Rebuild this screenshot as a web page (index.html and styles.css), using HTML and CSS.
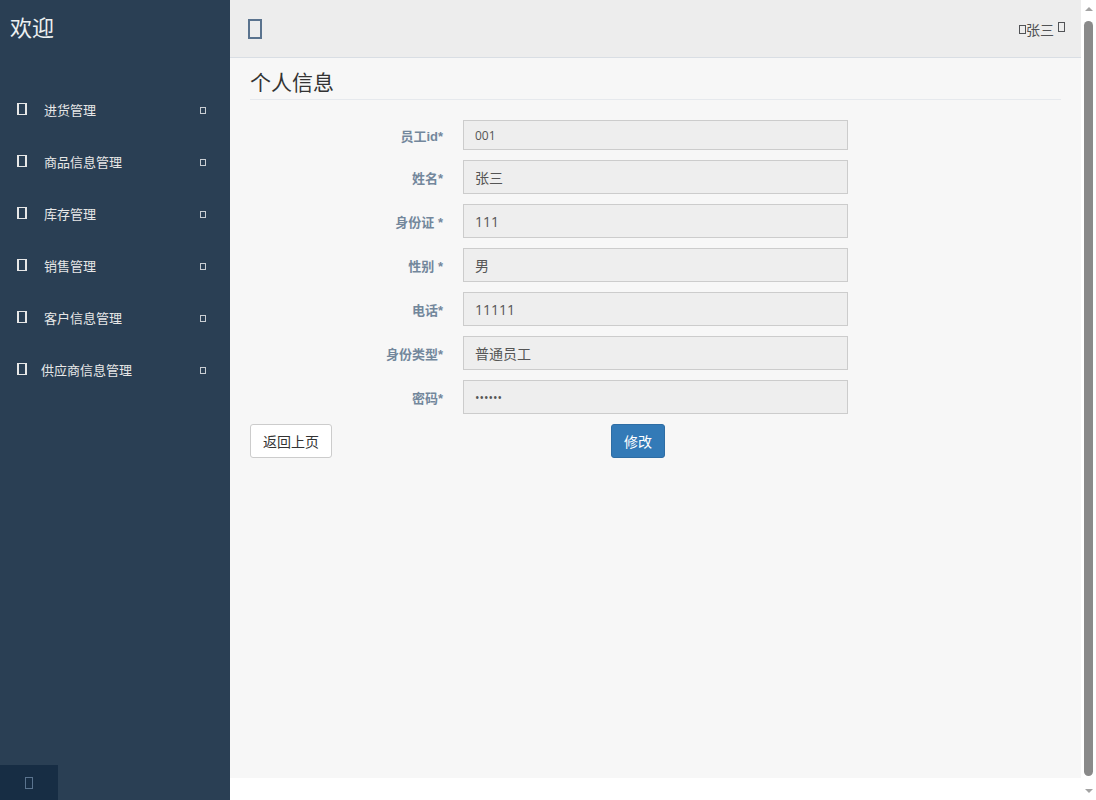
FILE: index.html
```html
<!DOCTYPE html>
<html lang="zh">
<head>
<meta charset="utf-8">
<title>个人信息</title>
<link rel="stylesheet" href="styles.css">
</head>
<body>
<div class="page">
  <aside class="sidebar">
    <div class="nav-title">欢迎</div>
    <ul class="menu">
      <li class="menu-item"><span class="ico"></span><span class="label">进货管理</span><span class="caret"></span></li>
      <li class="menu-item"><span class="ico"></span><span class="label">商品信息管理</span><span class="caret"></span></li>
      <li class="menu-item"><span class="ico"></span><span class="label">库存管理</span><span class="caret"></span></li>
      <li class="menu-item"><span class="ico"></span><span class="label">销售管理</span><span class="caret"></span></li>
      <li class="menu-item"><span class="ico"></span><span class="label">客户信息管理</span><span class="caret"></span></li>
      <li class="menu-item"><span class="ico"></span><span class="label label-wide">供应商信息管理</span><span class="caret"></span></li>
    </ul>
    <div class="sidebar-footer"><span class="foot-ico"></span></div>
  </aside>
  <div class="main">
    <header class="topnav">
      <span class="toggle"></span>
      <div class="user"><span class="u-ico"></span>张三 <span class="u-caret"></span></div>
    </header>
    <section class="content">
      <h3 class="page-title">个人信息</h3>
      <form class="form">
        <div class="row row-first">
          <label class="f-label">员工id*</label>
          <input class="f-input f-small" type="text" value="001" readonly>
        </div>
        <div class="row">
          <label class="f-label">姓名*</label>
          <input class="f-input" type="text" value="张三" readonly>
        </div>
        <div class="row">
          <label class="f-label">身份证 *</label>
          <input class="f-input" type="text" value="111" readonly>
        </div>
        <div class="row">
          <label class="f-label">性别 *</label>
          <input class="f-input" type="text" value="男" readonly>
        </div>
        <div class="row">
          <label class="f-label">电话*</label>
          <input class="f-input" type="text" value="11111" readonly>
        </div>
        <div class="row">
          <label class="f-label">身份类型*</label>
          <input class="f-input" type="text" value="普通员工" readonly>
        </div>
        <div class="row">
          <label class="f-label">密码*</label>
          <input class="f-input f-pass" type="password" value="123456" readonly>
        </div>
        <div class="actions">
          <button type="button" class="btn btn-default">返回上页</button>
          <button type="button" class="btn btn-primary">修改</button>
        </div>
      </form>
    </section>
  </div>
</div>
<div class="scrollbar" aria-hidden="true">
  <span class="sb-up"></span>
  <span class="sb-thumb"></span>
  <span class="sb-down"></span>
</div>
</body>
</html>
```

FILE: styles.css
```css
html, body {
  margin: 0;
  padding: 0;
  background: #ffffff;
}
body {
  font-family: "Liberation Sans", "Noto Sans CJK SC", sans-serif;
  color: #73879C;
  font-size: 13px;
  padding-right: 15px;
}
.page {
  display: flex;
  min-height: 816px;
  align-items: stretch;
}
.sidebar {
  width: 230px;
  flex: 0 0 230px;
  background: #2A3F54;
  color: #E7E7E7;
}
.nav-title {
  height: 57px;
  box-sizing: border-box;
  padding: 15px 0 0 10px;
  font-size: 22px;
  line-height: 28px;
  color: #ECF0F1;
}
.menu {
  list-style: none;
  margin: 28px 0 0 0;
  padding: 0;
}
.menu-item {
  height: 52px;
  display: flex;
  align-items: center;
  padding-left: 17px;
  box-sizing: border-box;
}
.ico {
  width: 6px;
  height: 10px;
  border: 2px solid #E7E7E7;
  border-top-width: 1px;
  border-bottom-width: 1px;
  margin-top: -4px;
  flex: 0 0 auto;
}
.label {
  margin-left: 17px;
  width: 156px;
  font-size: 13px;
  color: #E7E7E7;
  line-height: 16px;
}
.label-wide {
  margin-left: 14px;
  width: 159px;
}
.caret {
  width: 4px;
  height: 5px;
  border: 1px solid #C8CDD2;
  margin-top: -2px;
}
.sidebar-footer {
  position: fixed;
  left: 0;
  bottom: 0;
  width: 58px;
  height: 35px;
  background: #172D44;
  display: flex;
  align-items: center;
  justify-content: center;
}
.foot-ico {
  width: 6px;
  height: 10px;
  border: 1px solid #5A738E;
}
.main {
  flex: 1 1 auto;
  display: flex;
  flex-direction: column;
}
.topnav {
  height: 58px;
  box-sizing: border-box;
  background: #EDEDED;
  border-bottom: 1px solid #D9DEE4;
  display: flex;
  align-items: center;
  justify-content: space-between;
  padding: 0 16px 0 18px;
}
.toggle {
  width: 10px;
  height: 16px;
  border: 2px solid #5A738E;
}
.user {
  font-size: 14px;
  color: #515356;
  display: flex;
  align-items: center;
}
.u-ico {
  width: 5px;
  height: 7px;
  border: 1px solid #515356;
  margin-top: 1px;
}
.u-caret {
  width: 5px;
  height: 8px;
  border: 1px solid #515356;
  margin-left: 4px;
  margin-top: -4px;
}
.content {
  background: #F7F7F7;
  height: 720px;
  box-sizing: border-box;
  padding: 11px 20px 0 20px;
}
.page-title {
  margin: 0;
  font-size: 21px;
  font-weight: normal;
  color: #333333;
  line-height: 28px;
  padding-bottom: 2px;
  border-bottom: 1px solid #E6E9ED;
}
.form {
  margin-top: 20px;
}
.row {
  display: flex;
  align-items: center;
  margin-bottom: 10px;
}
.f-label {
  width: 193px;
  padding-right: 20px;
  text-align: right;
  font-weight: bold;
  font-size: 13px;
  color: #73879C;
}
.f-input {
  width: 385px;
  height: 34px;
  box-sizing: border-box;
  margin: 0;
  padding: 0 11px;
  background: #EEEEEE;
  border: 1px solid #CCCCCC;
  border-radius: 0;
  font-family: "Open Sans", "Noto Sans CJK SC", sans-serif;
  font-size: 14px;
  color: #555555;
  outline: none;
}
.f-small {
  height: 30px;
  font-size: 12px;
}
.f-pass {
  font-size: 12px;
}
.actions {
  display: flex;
  align-items: center;
}
.btn {
  height: 34px;
  box-sizing: border-box;
  border-radius: 3px;
  font-family: "Liberation Sans", "Noto Sans CJK SC", sans-serif;
  font-size: 14px;
  padding: 0 12px;
  cursor: pointer;
}
.btn-default {
  width: 82px;
  background: #FFFFFF;
  border: 1px solid #CCCCCC;
  color: #333333;
}
.btn-primary {
  width: 54px;
  margin-left: 279px;
  background: #337AB7;
  border: 1px solid #2E6DA4;
  color: #FFFFFF;
}
.scrollbar {
  position: fixed;
  top: 0;
  right: 0;
  width: 15px;
  height: 800px;
  background: #FFFFFF;
  display: flex;
  flex-direction: column;
  align-items: center;
}
.sb-up {
  margin-top: 7px;
  width: 0;
  height: 0;
  border-left: 4px solid transparent;
  border-right: 4px solid transparent;
  border-bottom: 4px solid #A3A3A3;
}
.sb-thumb {
  margin-top: 10px;
  width: 9px;
  height: 755px;
  border-radius: 5px;
  background: #8A8A8A;
}
.sb-down {
  margin-top: 13px;
  width: 0;
  height: 0;
  border-left: 4px solid transparent;
  border-right: 4px solid transparent;
  border-top: 4px solid #A3A3A3;
}
```
